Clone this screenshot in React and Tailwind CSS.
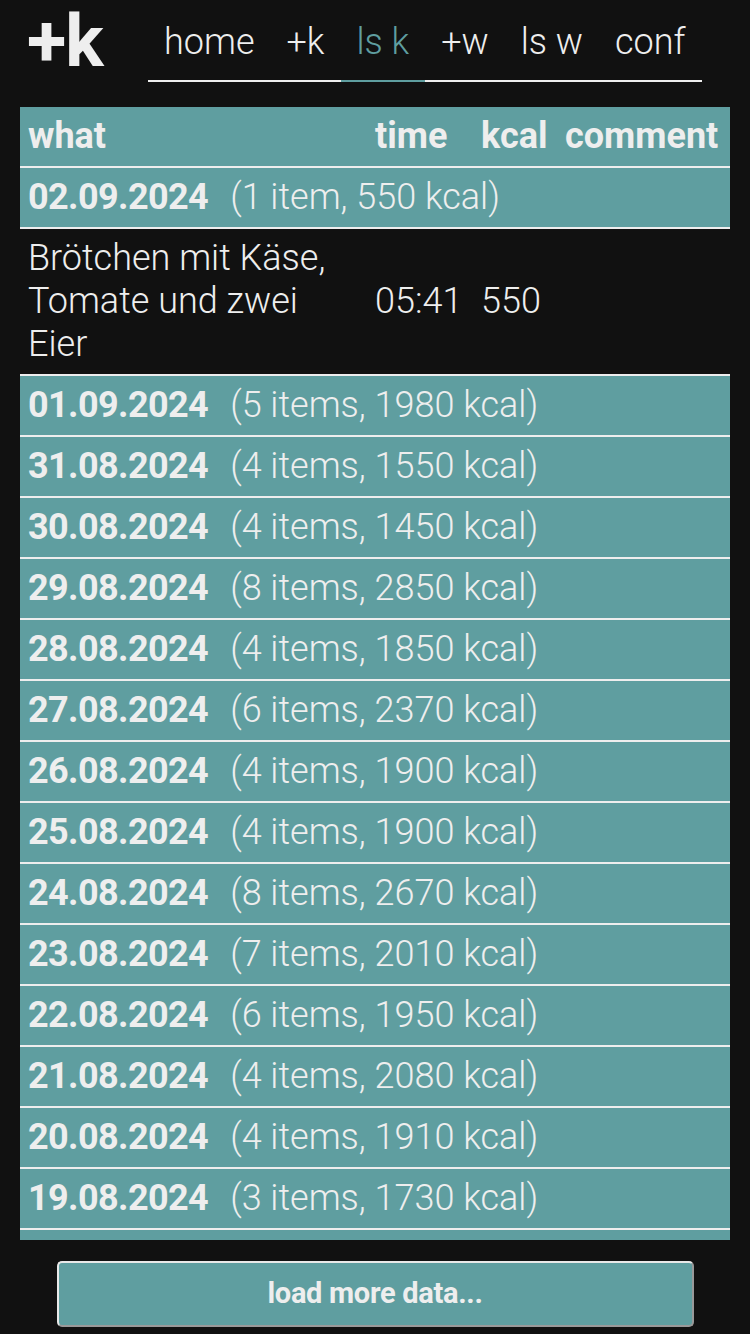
import React from 'react';

const NAV = ['home', '+k', 'ls k', '+w', 'ls w', 'conf'];

const DAYS = [
  ['01.09.2024', '5 items, 1980 kcal'],
  ['31.08.2024', '4 items, 1550 kcal'],
  ['30.08.2024', '4 items, 1450 kcal'],
  ['29.08.2024', '8 items, 2850 kcal'],
  ['28.08.2024', '4 items, 1850 kcal'],
  ['27.08.2024', '6 items, 2370 kcal'],
  ['26.08.2024', '4 items, 1900 kcal'],
  ['25.08.2024', '4 items, 1900 kcal'],
  ['24.08.2024', '8 items, 2670 kcal'],
  ['23.08.2024', '7 items, 2010 kcal'],
  ['22.08.2024', '6 items, 1950 kcal'],
  ['21.08.2024', '4 items, 2080 kcal'],
  ['20.08.2024', '4 items, 1910 kcal'],
  ['19.08.2024', '3 items, 1730 kcal'],
];

function DayRow({ date, summary }) {
  return (
    <tr className="bg-[#5f9ea0] border-b-2 border-[#eee]">
      <td colSpan={4} className="px-2 py-2 whitespace-nowrap">
        <span className="font-bold tracking-[-0.6px]">{date}</span>
        <span className="font-light ml-[22px]">({summary})</span>
      </td>
    </tr>
  );
}

export default function App() {
  return (
    <div className="min-h-screen bg-[#111111] text-[#eeeeee] font-['Roboto','Open_Sans',sans-serif]">
      {/* Header */}
      <header className="flex pl-[27px]">
        <div className="w-[121px] mt-[6px] text-[72px] leading-none font-bold tracking-[-1px]">+k</div>
        <ul className="flex mt-[21px]">
          {NAV.map((item) => (
            <li
              key={item}
              className={`px-4 pb-[16px] text-[36px] leading-[43px] font-light border-b-2 whitespace-nowrap ${
                item === 'ls k' ? 'text-[#5f9ea0] border-[#5f9ea0]' : 'border-[#eeeeee]'
              }`}
            >
              {item}
            </li>
          ))}
        </ul>
      </header>

      {/* Table (scroll area, cut off at the bottom) */}
      <div className="mt-[25px] mx-[20px] h-[1133px] overflow-hidden">
        <table className="w-[710px] table-fixed border-collapse text-[36px] leading-[43px]">
          <colgroup>
            <col className="w-[347px]" />
            <col className="w-[106px]" />
            <col className="w-[84px]" />
            <col className="w-[173px]" />
          </colgroup>
          <thead>
            <tr className="bg-[#5f9ea0] border-b-2 border-[#eee] font-bold text-left">
              <th className="px-2 py-2">what</th>
              <th className="px-2 py-2">time</th>
              <th className="px-2 py-2">kcal</th>
              <th className="px-2 py-2 whitespace-nowrap">comment</th>
            </tr>
          </thead>
          <tbody>
            <DayRow date="02.09.2024" summary="1 item, 550 kcal" />
            <tr className="border-b-2 border-[#eee] font-light">
              <td className="px-2 py-2">
                Brötchen mit Käse,<br />Tomate und zwei<br />Eier
              </td>
              <td className="px-2 py-2">05:41</td>
              <td className="px-2 py-2">550</td>
              <td className="px-2 py-2"></td>
            </tr>
            {DAYS.map(([d, s]) => (
              <DayRow key={d} date={d} summary={s} />
            ))}
            <tr className="bg-[#5f9ea0]">
              <td colSpan={4} className="h-[59px]"></td>
            </tr>
          </tbody>
        </table>
      </div>

      {/* Load more */}
      <button className="block mx-auto mt-[21px] w-[637px] h-[66px] bg-[#5f9ea0] rounded-[5px] border-2 border-t-[#e8e8e8] border-l-[#e8e8e8] border-r-[#999] border-b-[#999] text-[29px] font-bold text-[#eee] tracking-[-0.3px]">
        load more data...
      </button>
    </div>
  );
}
